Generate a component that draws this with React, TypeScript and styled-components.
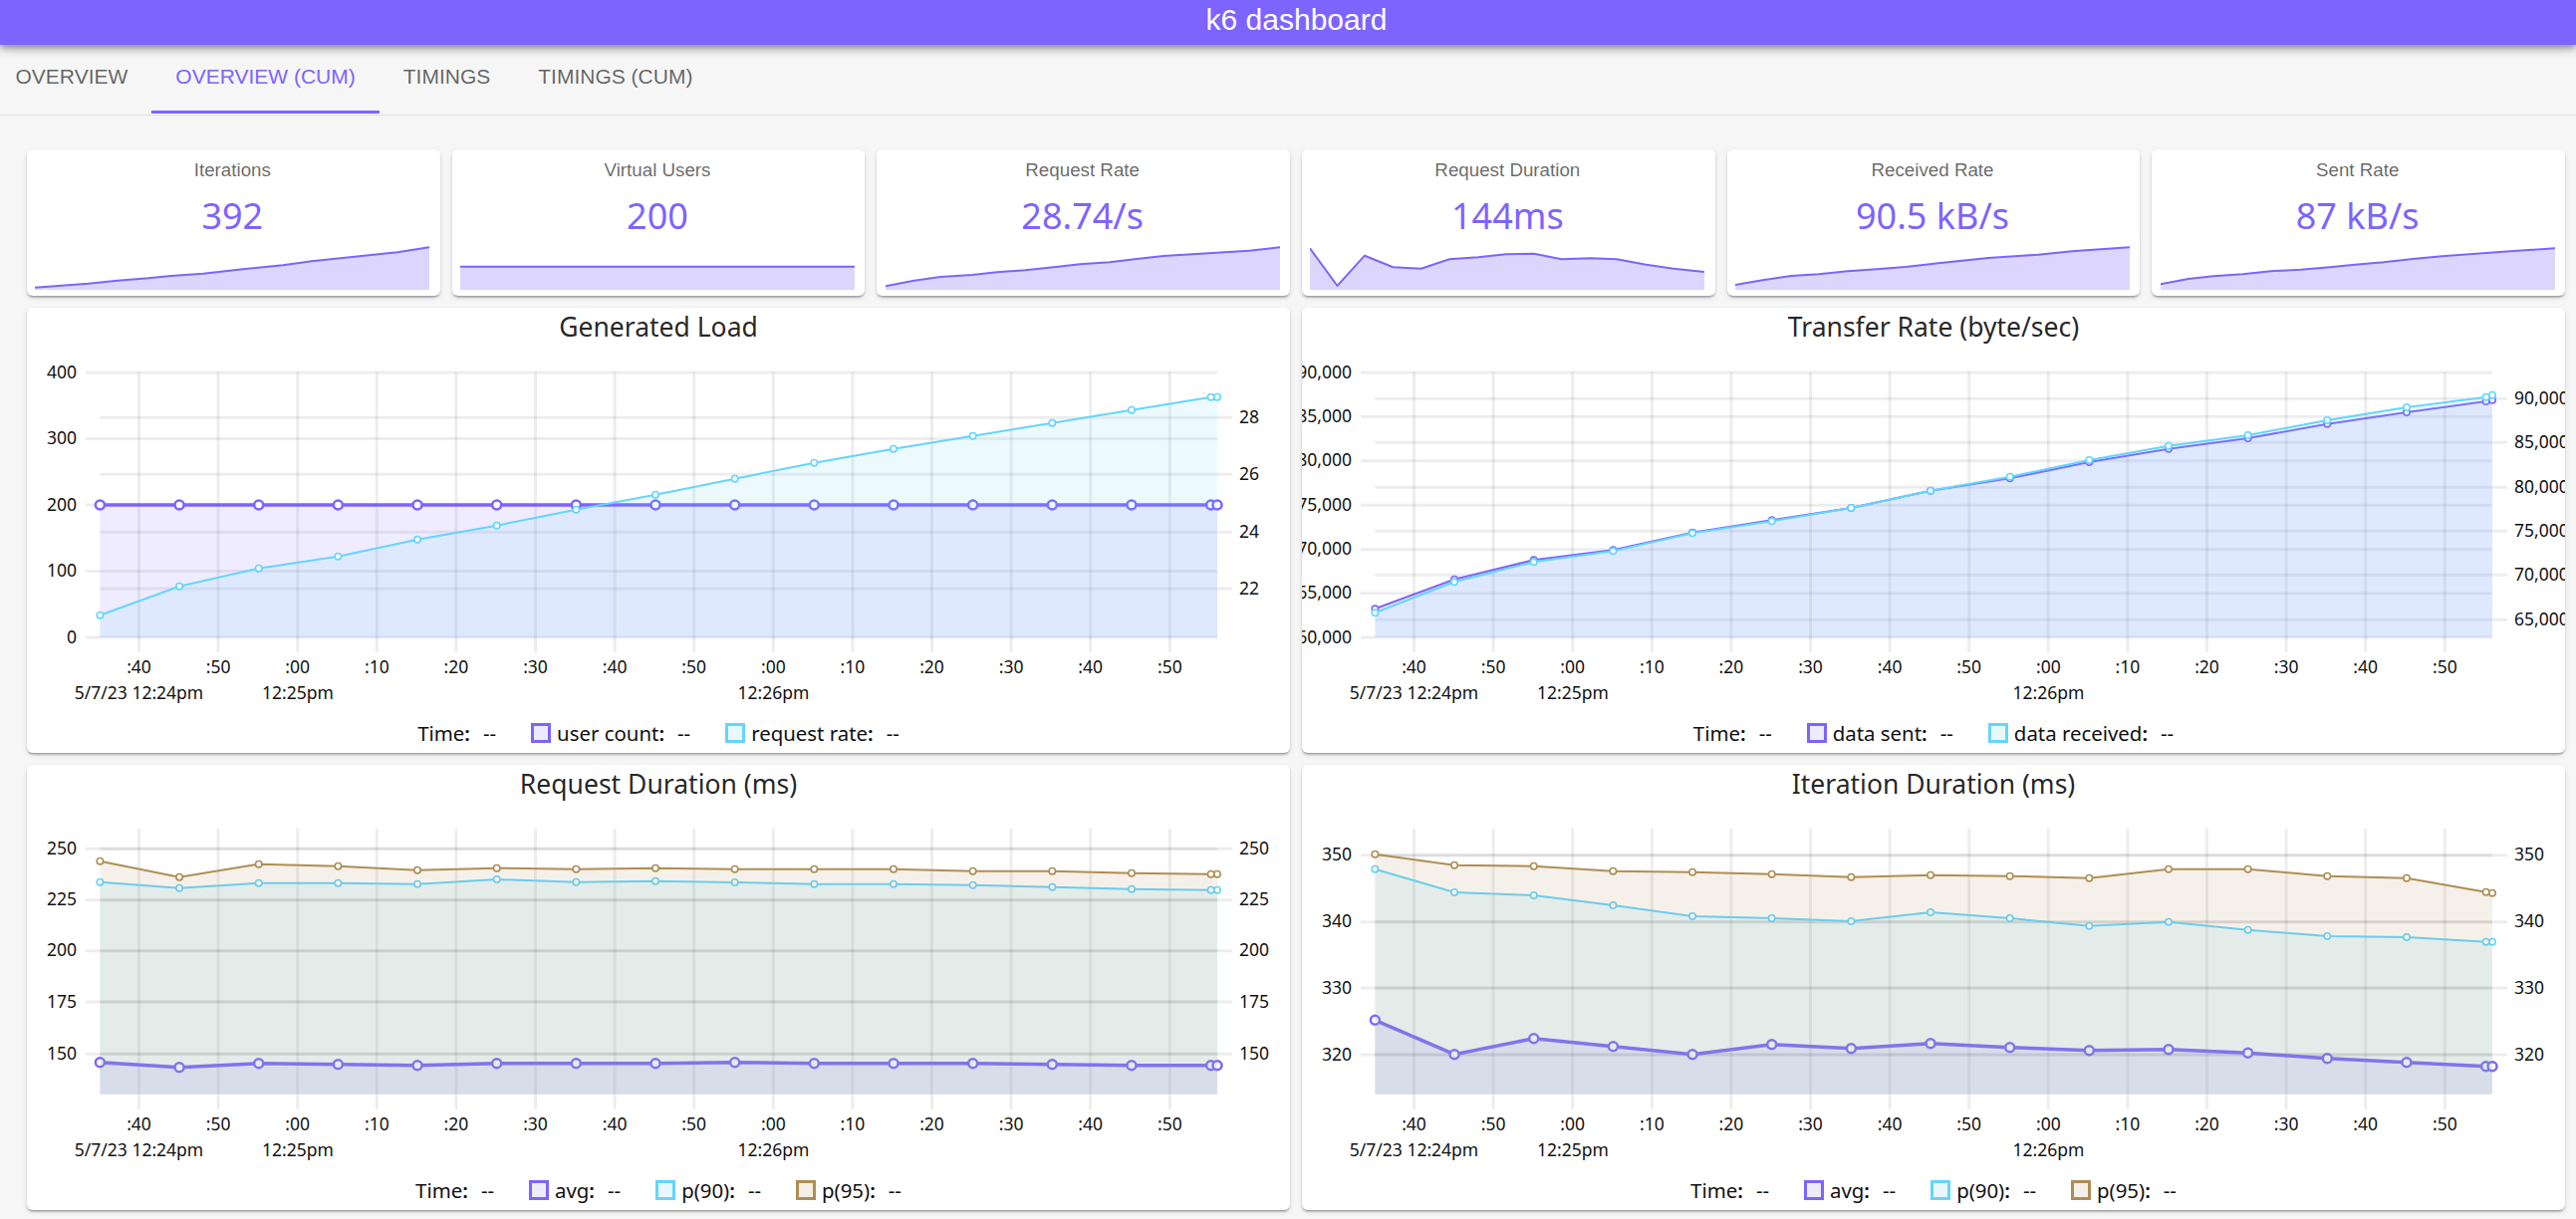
import React from "react";
import styled, { createGlobalStyle } from "styled-components";

const PURPLE = "#7d64ff";
const CYAN = "#64d5ff";
const BROWN = "#b08d54";

const GlobalStyle = createGlobalStyle`
  html, body {
    margin: 0;
    padding: 0;
    background: #f6f6f6;
    overflow: hidden;
  }
`;

const Page = styled.div`
  width: 2586px;
  height: 1224px;
  font-family: "Liberation Sans", Arial, sans-serif;
`;

const Header = styled.header`
  position: relative;
  z-index: 2;
  box-sizing: border-box;
  height: 45px;
  padding: 0 0 5px 17px;
  display: flex;
  align-items: center;
  justify-content: center;
  background: ${PURPLE};
  color: #fff;
  font-size: 30px;
  box-shadow: 0 3px 6px -1px rgba(0, 0, 0, 0.3), 0 6px 8px 0 rgba(0, 0, 0, 0.14),
    0 2px 15px 0 rgba(0, 0, 0, 0.12);
`;

const TabBar = styled.nav`
  box-sizing: border-box;
  height: 70.5px;
  display: flex;
  padding-left: 0;
  border-bottom: 1.5px solid #e0e0e0;
`;

const Tab = styled.div<{ $active?: boolean; $first?: boolean }>`
  box-sizing: border-box;
  height: 69px;
  padding: 0 24px 3px ${(p) => (p.$first ? "15.5px" : "24px")};
  display: flex;
  align-items: center;
  font-size: 21px;
  color: ${(p) => (p.$active ? PURPLE : "rgba(0, 0, 0, 0.6)")};
  border-bottom: 3px solid ${(p) => (p.$active ? PURPLE : "transparent")};
`;

const Content = styled.main`
  display: flex;
  flex-direction: column;
  gap: 12px;
  padding: 34.5px 11px 0 27px;
`;

const StatRow = styled.section`
  display: grid;
  grid-template-columns: repeat(6, 1fr);
  gap: 12px;
`;

const Card = styled.div`
  background: #fff;
  border-radius: 6px;
  box-shadow: 0 3px 2px -2px rgba(0, 0, 0, 0.2), 0 2px 2px 0 rgba(0, 0, 0, 0.14),
    0 2px 5px 0 rgba(0, 0, 0, 0.12);
  overflow: hidden;
`;

const StatCard = styled(Card)`
  box-sizing: border-box;
  height: 147px;
  padding: 9px 10px 6px 8px;
  display: flex;
  flex-direction: column;
  align-items: center;
`;

const StatTitle = styled.div`
  height: 24px;
  line-height: 24px;
  font-size: 18.75px;
  color: rgba(0, 0, 0, 0.6);
`;

const StatValue = styled.div`
  margin-top: 13px;
  height: 42px;
  line-height: 42px;
  font-family: "Noto Sans", sans-serif;
  font-size: 36px;
  color: ${PURPLE};
`;

const Spark = styled.svg`
  display: block;
  width: 396px;
  height: 53px;
  flex: none;
`;

const ChartRow = styled.section`
  display: grid;
  grid-template-columns: 1fr 1fr;
  gap: 12px;
`;

const ChartCard = styled(Card)`
  height: 447px;
  display: flex;
  flex-direction: column;
`;

const ChartTitle = styled.div`
  height: 38px;
  padding-bottom: 2px;
  flex: none;
  display: flex;
  align-items: center;
  justify-content: center;
  font-family: "Noto Sans", sans-serif;
  font-size: 26.5px;
  color: rgba(0, 0, 0, 0.87);
`;

const ChartSvg = styled.svg`
  display: block;
  width: 1268px;
  height: 367px;
  flex: none;

  text {
    font-family: "Noto Sans", sans-serif;
    font-size: 17.5px;
    fill: #111;
  }
`;

const Legend = styled.div`
  height: 40px;
  flex: none;
  display: flex;
  align-items: center;
  justify-content: center;
  gap: 35px;
  font-family: "Noto Sans", sans-serif;
  font-size: 20.4px;
  color: #111;
`;

const LegendEntry = styled.div`
  display: flex;
  align-items: center;
`;

const Swatch = styled.span<{ $color: string; $fill: string }>`
  box-sizing: border-box;
  width: 20px;
  height: 20px;
  margin-right: 6px;
  border: 3px solid ${(p) => p.$color};
  background: ${(p) => p.$fill};
`;

const Colon = styled.span`
  font-weight: 600;
`;

const LegendValue = styled.span`
  margin-left: 13px;
`;

type Point = [number, number];

const sparks: { title: string; value: string; points: Point[] }[] = [
  {
    title: "Iterations",
    value: "392",
    points: [[0, 50.7], [54, 46.7], [83, 43.7], [114, 41.3], [137, 39], [169, 36.7], [209, 32.3], [249, 28.3], [278, 24.3], [321, 19.7], [364, 15.3], [396, 10.3]],
  },
  {
    title: "Virtual Users",
    value: "200",
    points: [[0, 29.7], [396, 29.7]],
  },
  {
    title: "Request Rate",
    value: "28.74/s",
    points: [[0, 49.3], [28.7, 43.7], [55.3, 40], [87, 38], [112, 35.3], [140, 33.3], [169, 30.3], [195, 27.3], [225, 25.3], [252, 22], [279, 19], [312, 17], [365, 13.7], [396, 10.3]],
  },
  {
    title: "Request Duration",
    value: "144ms",
    points: [[0, 11.3], [27.5, 49], [55, 18.7], [83.3, 30.3], [111.7, 31.7], [140, 22.3], [169, 20.3], [196.7, 17.3], [225, 16.7], [252.5, 22.3], [281.7, 21.3], [308, 22.3], [337.5, 27.7], [365, 31.7], [396, 35]],
  },
  {
    title: "Received Rate",
    value: "90.5 kB/s",
    points: [[0, 48], [29, 43], [56, 39], [84, 37.3], [113, 34.3], [142, 32.3], [171, 30], [204, 26.3], [254, 21], [304, 17.7], [338, 14.3], [396, 10.3]],
  },
  {
    title: "Sent Rate",
    value: "87 kB/s",
    points: [[0, 47.3], [28, 42], [53, 39.3], [82.5, 37.3], [111, 34.3], [140.8, 32.7], [170, 30.3], [195, 27.7], [224, 25.3], [253, 22], [282.5, 19.3], [337, 15.3], [396, 11.3]],
  },
];

type Series = {
  name: string;
  color: string;
  heavy?: boolean;
  ys: number[];
};

type ChartDef = {
  title: string;
  dx: number;
  top: number;
  gridTop: number;
  plotBottom: number;
  left: [number, string][];
  right: [number, string][];
  series: Series[];
};

const charts: ChartDef[] = [
  {
    title: "Generated Load",
    dx: 0,
    top: 347,
    gridTop: 374,
    plotBottom: 640,
    left: [[374, "400"], [440.5, "300"], [507, "200"], [573.5, "100"], [640, "0"]],
    right: [[419.3, "28"], [476.3, "26"], [534.3, "24"], [591, "22"]],
    series: [
      { name: "user count", color: PURPLE, heavy: true, ys: Array(16).fill(507) },
      { name: "request rate", color: CYAN, ys: [617.7, 588.7, 570.7, 558.7, 541.7, 527.7, 511.7, 496.7, 480.7, 464.7, 450.7, 437.7, 424.7, 411.7, 398.7, 398.7] },
    ],
  },
  {
    title: "Transfer Rate (byte/sec)",
    dx: 1280,
    top: 347,
    gridTop: 374,
    plotBottom: 640,
    left: [[374, "90,000"], [418.3, "85,000"], [462.7, "80,000"], [507.3, "75,000"], [551.7, "70,000"], [595.7, "65,000"], [640, "60,000"]],
    right: [[400.3, "90,000"], [444.3, "85,000"], [489.3, "80,000"], [533.3, "75,000"], [577.3, "70,000"], [622.3, "65,000"]],
    series: [
      { name: "data sent", color: PURPLE, ys: [611.3, 581.7, 562.3, 552.3, 534.7, 522.3, 510, 492.7, 480.3, 464, 450.7, 440, 425.7, 414, 403, 401.7] },
      { name: "data received", color: CYAN, ys: [615.3, 584.3, 564.3, 553.3, 535.3, 523.3, 510, 492.7, 478.7, 462, 447.7, 437, 422, 409, 398.7, 396.7] },
    ],
  },
  {
    title: "Request Duration (ms)",
    dx: 0,
    top: 806,
    gridTop: 832,
    plotBottom: 1098.7,
    left: [[852.3, "250"], [903.7, "225"], [954.7, "200"], [1006, "175"], [1058.3, "150"]],
    right: [[852.3, "250"], [903.7, "225"], [954.7, "200"], [1006, "175"], [1058.3, "150"]],
    series: [
      { name: "avg", color: PURPLE, heavy: true, ys: [1066.7, 1071.7, 1067.7, 1068.7, 1069.7, 1067.7, 1067.7, 1067.7, 1066.7, 1067.7, 1067.7, 1067.7, 1068.7, 1069.7, 1069.7, 1069.7] },
      { name: "p(90)", color: CYAN, ys: [885.7, 891.7, 886.7, 886.7, 887.7, 883, 885.7, 884.7, 886, 887.7, 887.7, 888.7, 890.7, 892.7, 893.7, 893.7] },
      { name: "p(95)", color: BROWN, ys: [864.7, 880.7, 867.7, 869.7, 873.7, 871.7, 872.7, 871.7, 872.7, 872.7, 872.7, 874.7, 874.7, 876.7, 877.7, 877.7] },
    ],
  },
  {
    title: "Iteration Duration (ms)",
    dx: 1280,
    top: 806,
    gridTop: 832,
    plotBottom: 1098.7,
    left: [[858.7, "350"], [925.7, "340"], [992, "330"], [1059, "320"]],
    right: [[858.7, "350"], [925.7, "340"], [992, "330"], [1059, "320"]],
    series: [
      { name: "avg", color: PURPLE, heavy: true, ys: [1024.3, 1058.7, 1042.7, 1050.7, 1058.7, 1048.7, 1052.7, 1047.7, 1051.7, 1054.7, 1053.7, 1057.3, 1062.7, 1066.7, 1070.7, 1070.7] },
      { name: "p(90)", color: CYAN, ys: [872.7, 896, 899, 909, 920, 922, 925, 916, 922, 929.7, 925.7, 933.7, 940, 941, 945.7, 945.7] },
      { name: "p(95)", color: BROWN, ys: [857.7, 868.7, 869.7, 874.7, 875.7, 877.7, 880.7, 878.7, 879.7, 881.7, 872.7, 872.7, 879.7, 881.7, 895.7, 896.7] },
    ],
  },
];

const secondsLabels = [":40", ":50", ":00", ":10", ":20", ":30", ":40", ":50", ":00", ":10", ":20", ":30", ":40", ":50"];
const GRID = "rgba(0, 0, 0, 0.07)";

const SparkChart: React.FC<{ points: Point[] }> = ({ points }) => {
  const line = points.map((p) => p.join(",")).join(" ");
  return (
    <Spark viewBox="0 0 396 53">
      <polygon points={`0,53 ${line} 396,53`} fill="#dcd6ff" />
      <polyline points={line} fill="none" stroke={PURPLE} strokeWidth="2" />
    </Spark>
  );
};

const LineChart: React.FC<{ chart: ChartDef }> = ({ chart }) => {
  const { dx, top, gridTop, plotBottom } = chart;
  const plotLeft = 100.4 + dx;
  const plotRight = 1222 + dx;
  const xs = chart.series[0].ys.map((_, i) => (i === 15 ? plotRight : plotLeft + 79.66 * i));
  const rowOne = plotBottom + 29;
  const rowTwo = plotBottom + 55;

  return (
    <ChartSvg viewBox={`${27 + dx} ${top + 2} 1268 367`}>
      {chart.left.map(([y, label]) => (
        <g key={`l${y}`}>
          <line x1={86 + dx} x2={plotRight} y1={y} y2={y} stroke={GRID} strokeWidth="3" />
          <text x={77 + dx} y={y - 1.5} textAnchor="end" dominantBaseline="central">
            {label}
          </text>
        </g>
      ))}
      {chart.right.map(([y, label]) => (
        <g key={`r${y}`}>
          <line x1={plotLeft} x2={1237 + dx} y1={y} y2={y} stroke={GRID} strokeWidth="3" />
          <text x={1244 + dx} y={y - 1.5} dominantBaseline="central">
            {label}
          </text>
        </g>
      ))}
      {secondsLabels.map((label, i) => {
        const x = 139.5 + dx + 79.6 * i;
        return (
          <g key={i}>
            <line x1={x} x2={x} y1={gridTop} y2={plotBottom + 15} stroke={GRID} strokeWidth="3" />
            <text x={x} y={rowOne} textAnchor="middle" dominantBaseline="central">
              {label}
            </text>
          </g>
        );
      })}
      <text x={139.5 + dx} y={rowTwo} textAnchor="middle" dominantBaseline="central">
        5/7/23 12:24pm
      </text>
      <text x={299 + dx} y={rowTwo} textAnchor="middle" dominantBaseline="central">
        12:25pm
      </text>
      <text x={776.5 + dx} y={rowTwo} textAnchor="middle" dominantBaseline="central">
        12:26pm
      </text>
      {chart.series.map((s) => {
        const line = s.ys.map((y, i) => `${xs[i]},${y}`).join(" ");
        return (
          <g key={s.name}>
            <polygon
              points={`${plotLeft},${plotBottom} ${line} ${plotRight},${plotBottom}`}
              fill={s.color}
              fillOpacity="0.125"
            />
            <polyline points={line} fill="none" stroke={s.color} strokeWidth={s.heavy ? 3.5 : 2} />
            {s.ys.map((y, i) => (
              <circle
                key={i}
                cx={xs[i]}
                cy={y}
                r={s.heavy ? 4.5 : 3.2}
                fill="#fff"
                stroke={s.color}
                strokeWidth={s.heavy ? 2.5 : 1.6}
              />
            ))}
          </g>
        );
      })}
    </ChartSvg>
  );
};

const fills: Record<string, string> = {
  [PURPLE]: "#eeebff",
  [CYAN]: "#e9f8ff",
  [BROWN]: "#f4efe7",
};

const ChartPanel: React.FC<{ chart: ChartDef }> = ({ chart }) => (
  <ChartCard>
    <ChartTitle>{chart.title}</ChartTitle>
    <LineChart chart={chart} />
    <Legend>
      <LegendEntry>
        Time<Colon>:</Colon>
        <LegendValue>--</LegendValue>
      </LegendEntry>
      {chart.series.map((s) => (
        <LegendEntry key={s.name}>
          <Swatch $color={s.color} $fill={fills[s.color]} />
          {s.name}
          <Colon>:</Colon>
          <LegendValue>--</LegendValue>
        </LegendEntry>
      ))}
    </Legend>
  </ChartCard>
);

const App: React.FC = () => (
  <Page>
    <GlobalStyle />
    <Header>k6 dashboard</Header>
    <TabBar>
      <Tab $first>OVERVIEW</Tab>
      <Tab $active>OVERVIEW (CUM)</Tab>
      <Tab>TIMINGS</Tab>
      <Tab>TIMINGS (CUM)</Tab>
    </TabBar>
    <Content>
      <StatRow>
        {sparks.map((s) => (
          <StatCard key={s.title}>
            <StatTitle>{s.title}</StatTitle>
            <StatValue>{s.value}</StatValue>
            <SparkChart points={s.points} />
          </StatCard>
        ))}
      </StatRow>
      <ChartRow>
        <ChartPanel chart={charts[0]} />
        <ChartPanel chart={charts[1]} />
      </ChartRow>
      <ChartRow>
        <ChartPanel chart={charts[2]} />
        <ChartPanel chart={charts[3]} />
      </ChartRow>
    </Content>
  </Page>
);

export default App;
